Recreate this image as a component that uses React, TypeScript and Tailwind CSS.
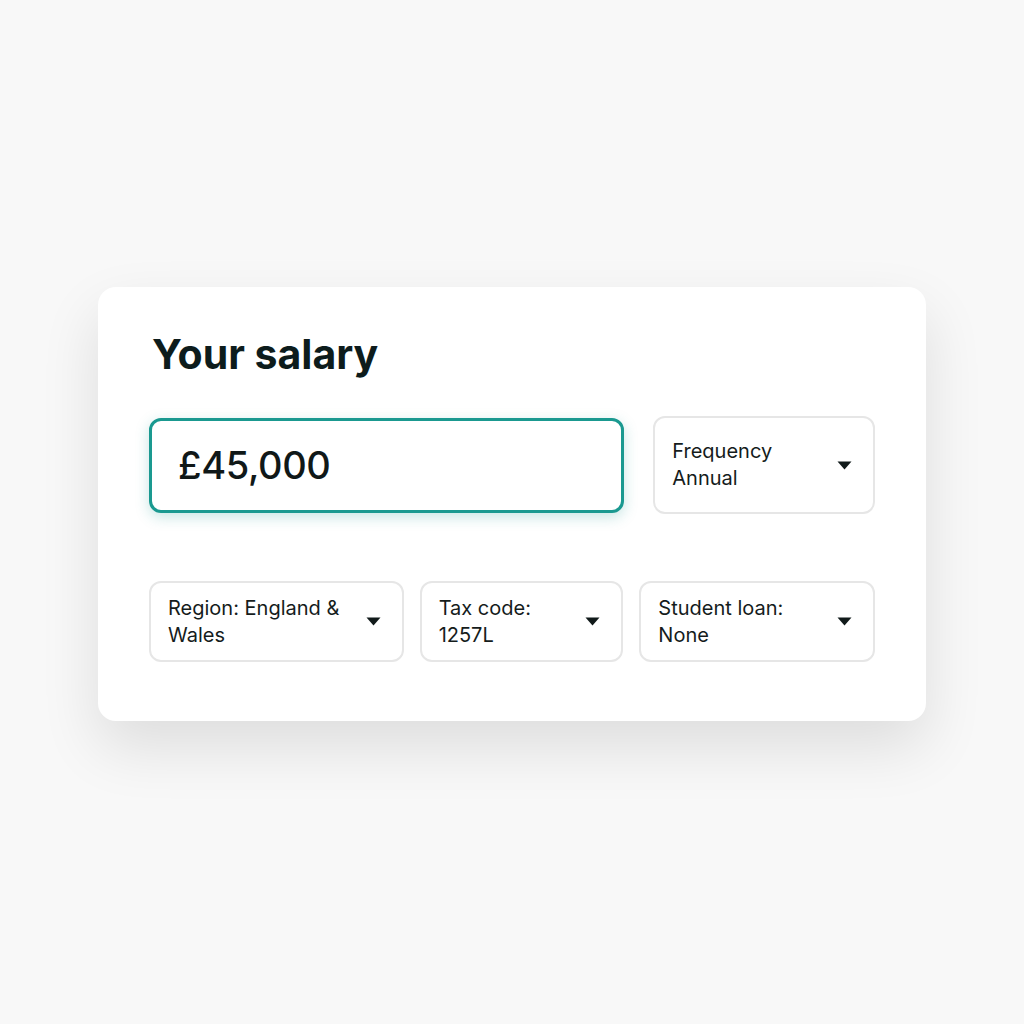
import React from 'react'

function Caret() {
  return (
    <svg width="15" height="9" viewBox="0 0 15 9" className="shrink-0">
      <path d="M0.5 0.5 H14.5 L7.5 8.5 Z" fill="#111a1a" />
    </svg>
  )
}

interface SelectBoxProps {
  lines: string[]
  className: string
}

function SelectBox({ lines, className }: SelectBoxProps) {
  return (
    <div
      className={`flex items-center justify-between rounded-[12px] border-2 border-[#e6e6e6] bg-white pl-[17px] pr-[21px] ${className}`}
    >
      <div className="text-[20px] leading-[27px] text-[#151c1c]">
        {lines.map(l => (
          <div key={l}>{l}</div>
        ))}
      </div>
      <Caret />
    </div>
  )
}

export default function App() {
  return (
    <div
      className="min-h-screen w-full bg-[#f8f8f8] pt-[287px]"
      style={{ fontFamily: 'Inter, "Noto Sans", sans-serif' }}
    >
      <div className="mx-auto w-[828px] rounded-[18px] bg-white px-[51px] pt-[43px] pb-[59px] shadow-[0_26px_60px_rgba(0,0,0,0.11)]">
        <h1 className="pl-[3px] text-[41px] font-bold leading-[48px] text-[#0d1c1c]">
          Your salary
        </h1>

        <div className="mt-[38px] flex items-center gap-[29px]">
          <div className="flex h-[95px] w-[476px] items-center rounded-[12px] border-[3px] border-[#1a9990] bg-white pl-[26px] shadow-[0_4px_14px_rgba(26,153,144,0.25)]">
            <span className="text-[38px] font-medium tracking-[-0.01em] text-[#101818]">£45,000</span>
          </div>
          <SelectBox lines={['Frequency', 'Annual']} className="h-[98px] w-[222px]" />
        </div>

        <div className="mt-[67px] flex gap-[16px]">
          <SelectBox lines={['Region: England &', 'Wales']} className="h-[81px] w-[255px]" />
          <SelectBox lines={['Tax code:', '1257L']} className="h-[81px] w-[204px]" />
          <SelectBox lines={['Student loan:', 'None']} className="h-[81px] w-[236px]" />
        </div>
      </div>
    </div>
  )
}
